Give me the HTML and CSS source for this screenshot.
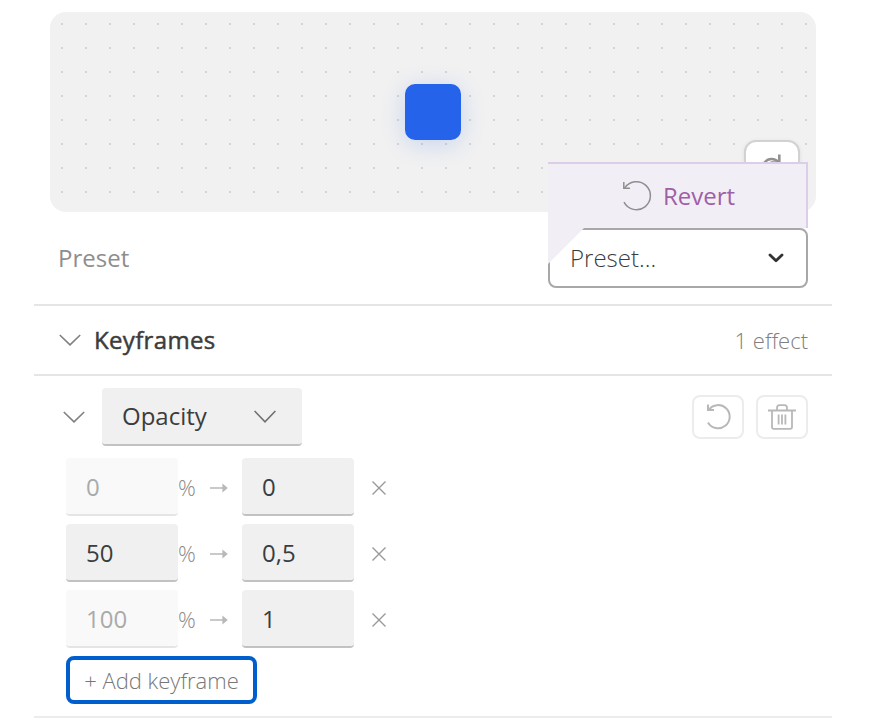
FILE: index.html
```html
<!DOCTYPE html>
<html lang="en">
<head>
    <meta charset="UTF-8">
    <title>Keyframes</title>
    <link rel="stylesheet" href="styles.css">
</head>
<body>
    <div class="panel">
        <div class="preview">
            <div class="preview-box"></div>
            <button class="replay">
                <svg width="28" height="28" viewBox="0 0 28 28" fill="none" stroke="#919191" stroke-width="2.6">
                    <path d="M20.5 8A9 9 0 1 0 22.5 16"/>
                    <path d="M21.3 .6V8.5H12.5"/>
                </svg>
            </button>
        </div>

        <div class="preset-row">
            <span class="preset-label">Preset</span>
            <div class="preset-field">
                <div class="preset-select">
                    <span>Preset...</span>
                    <svg width="16" height="10" viewBox="0 0 16 10" fill="none" stroke="#333" stroke-width="2.8" stroke-linecap="round" stroke-linejoin="round">
                        <path d="M2 2L8 7.8L14 2"/>
                    </svg>
                </div>
                <div class="revert">
                    <svg width="30" height="32" viewBox="0 0 30 32" fill="none" stroke="#8f8f8f" stroke-width="1.5">
                        <path d="M2 22.2A14 14 0 1 0 2.6 8.2"/>
                        <path d="M1.8 2V8.2H8"/>
                    </svg>
                    <span>Revert</span>
                </div>
            </div>
        </div>

        <div class="section-head">
            <svg width="22" height="12" viewBox="0 0 22 12" fill="none" stroke="#808080" stroke-width="1.6">
                <path d="M.8 1L11 10.9L21.2 1"/>
            </svg>
            <span class="section-title">Keyframes</span>
            <span class="section-count">1 effect</span>
        </div>

        <div class="effect">
            <div class="effect-head">
                <svg width="22" height="12" viewBox="0 0 22 12" fill="none" stroke="#808080" stroke-width="1.6">
                    <path d="M.8 1L11 10.9L21.2 1"/>
                </svg>
                <div class="effect-select">
                    <span>Opacity</span>
                    <svg width="22" height="13" viewBox="0 0 22 13" fill="none" stroke="#707070" stroke-width="1.6">
                        <path d="M.6 1L11 11.8L21.4 1"/>
                    </svg>
                </div>
                <div class="effect-actions">
                    <button class="icon-btn">
                        <svg width="26" height="28" viewBox="0 0 26 28" fill="none" stroke="#b8b8b8" stroke-width="2">
                            <path d="M3 19.4A11.6 11.6 0 1 0 3.6 7"/>
                            <path d="M3 1.6V7H9"/>
                        </svg>
                    </button>
                    <button class="icon-btn">
                        <svg width="28" height="26" viewBox="0 0 28 26" fill="none" stroke="#b8b8b8" stroke-width="1.8">
                            <path d="M0 6.5H28M4 6.5V23Q4 24.8 5.8 24.8H22.2Q24 24.8 24 23V6.5M9 6.5V4Q9 1.2 11.5 1.2H16.5Q19 1.2 19 4V6.5M10.6 10.6V20.4M14 10.6V20.4M17.4 10.6V20.4"/>
                        </svg>
                    </button>
                </div>
            </div>

            <div class="keyframe">
                <input class="field" value="0" disabled>
                <span class="percent">%</span>
                <svg class="arrow" width="18" height="10" viewBox="0 0 18 10"><path d="M0 4.2H12.4V.4L17.8 5L12.4 9.6V5.8H0Z"/></svg>
                <input class="field" value="0">
                <svg class="remove" width="14" height="14" viewBox="0 0 14 14"><path d="M.5 .5L13.5 13.5M13.5 .5L.5 13.5"/></svg>
            </div>
            <div class="keyframe">
                <input class="field" value="50">
                <span class="percent">%</span>
                <svg class="arrow" width="18" height="10" viewBox="0 0 18 10"><path d="M0 4.2H12.4V.4L17.8 5L12.4 9.6V5.8H0Z"/></svg>
                <input class="field" value="0,5">
                <svg class="remove" width="14" height="14" viewBox="0 0 14 14"><path d="M.5 .5L13.5 13.5M13.5 .5L.5 13.5"/></svg>
            </div>
            <div class="keyframe">
                <input class="field" value="100" disabled>
                <span class="percent">%</span>
                <svg class="arrow" width="18" height="10" viewBox="0 0 18 10"><path d="M0 4.2H12.4V.4L17.8 5L12.4 9.6V5.8H0Z"/></svg>
                <input class="field" value="1">
                <svg class="remove" width="14" height="14" viewBox="0 0 14 14"><path d="M.5 .5L13.5 13.5M13.5 .5L.5 13.5"/></svg>
            </div>
            <button class="add">+ Add keyframe</button>
        </div>
    </div>
</body>
</html>
```
FILE: styles.css
```css
*{
    margin: 0;
    padding: 0;
    box-sizing: border-box;
}
body{
    background: #fff;
    font-family: "Open Sans", "Noto Sans", sans-serif;
    font-size: 24px;
    line-height: 32px;
    color: #3c3c3c;
    overflow: hidden;
}
button, input{
    font: inherit;
    color: inherit;
}
svg{
    display: block;
    flex: none;
}
.panel{
    width: 798px;
    margin-left: 34px;
    padding-top: 12px;
}

/* preview */
.preview{
    position: relative;
    display: flex;
    align-items: center;
    justify-content: center;
    height: 200px;
    margin: 0 16px;
    border-radius: 16px;
    background: #f1f1f1 radial-gradient(circle at 12px 12px, #d4d4d4 1.5px, transparent 1.5px) 0 0 / 24px 24px;
}
.preview-box{
    width: 56px;
    height: 56px;
    border-radius: 10px;
    background: #2563eb;
    box-shadow: 0 4px 24px rgba(37, 99, 235, .2);
}
.replay{
    position: absolute;
    right: 16px;
    bottom: 16px;
    display: flex;
    align-items: center;
    justify-content: center;
    width: 56px;
    height: 56px;
    border: 2px solid #d2d2d2;
    border-radius: 12px;
    background: #fff;
    box-shadow: 0 1px 4px rgba(0, 0, 0, .08);
}

/* preset */
.preset-row{
    display: flex;
    align-items: center;
    justify-content: space-between;
    height: 94px;
    padding: 0 24px;
    border-bottom: 2px solid #e5e5e5;
}
.preset-label{
    color: #8e8e8e;
}
.preset-field{
    position: relative;
    width: 260px;
}
.preset-select{
    display: flex;
    align-items: center;
    justify-content: space-between;
    height: 60px;
    padding: 0 22px 0 20px;
    border: 2px solid #a8a8a8;
    border-radius: 8px;
    font-weight: 300;
}
.revert{
    position: absolute;
    left: 0;
    bottom: 60px;
    display: flex;
    align-items: center;
    justify-content: center;
    gap: 11px;
    width: 260px;
    height: 66px;
    padding-left: 3px;
    border: solid #dccde8;
    border-width: 2px 2px 0 0;
    background: #f2eef6;
    color: #9f5fa6;
}
.revert::after{
    content: "";
    position: absolute;
    left: 0;
    top: 100%;
    width: 36px;
    height: 36px;
    background: #f2eef6;
    clip-path: polygon(0 0, 100% 0, 0 100%);
}

/* keyframes */
.section-head{
    display: flex;
    align-items: center;
    height: 70px;
    padding: 0 24px 0 25px;
    border-bottom: 2px solid #e5e5e5;
}
.section-title{
    margin-left: 13px;
    letter-spacing: .33px;
    -webkit-text-stroke: .5px #3c3c3c;
}
.section-count{
    margin-left: auto;
    font-size: 22px;
    font-weight: 300;
    color: #808080;
}
.effect{
    height: 342px;
    padding: 12px 24px 0 32px;
    border-bottom: 2px solid #ececec;
}
.effect-head{
    display: flex;
    align-items: center;
    height: 58px;
    margin-left: -3px;
}
.effect-select{
    display: flex;
    align-items: center;
    justify-content: space-between;
    width: 200px;
    height: 58px;
    margin-left: 17px;
    padding: 0 26px 0 20px;
    border-bottom: 2px solid #c2c2c2;
    border-radius: 4px;
    background: #f0f0f0;
}
.effect-actions{
    display: flex;
    gap: 12px;
    margin-left: auto;
}
.icon-btn{
    display: flex;
    align-items: center;
    justify-content: center;
    width: 52px;
    height: 44px;
    border: 2px solid #ececec;
    border-radius: 8px;
    background: #fff;
}
.keyframe{
    display: flex;
    align-items: center;
    height: 58px;
    margin-top: 8px;
}
.keyframe:nth-child(2){
    margin-top: 12px;
}
.field{
    width: 112px;
    height: 58px;
    padding: 0 20px;
    border: none;
    border-bottom: 2px solid #c2c2c2;
    border-radius: 4px;
    background: #f0f0f0;
    outline: none;
}
.field:disabled{
    border-color: #e5e5e5;
    background: #f9f9f9;
    color: #aaa;
}
.percent{
    width: 32px;
    font-size: 22px;
    font-weight: 300;
    color: #8c8c8c;
}
.arrow{
    margin: 2px 14px 0 0;
    fill: #b8b8b8;
}
.remove{
    margin: 2px 0 0 18px;
    stroke: #999;
    stroke-width: 1.4;
}
.add{
    display: block;
    width: 191px;
    height: 48px;
    margin-top: 8px;
    border: 4px solid #005fcc;
    border-radius: 8px;
    background: #fff;
    font-size: 22px;
    font-weight: 300;
    color: #777;
}
```
